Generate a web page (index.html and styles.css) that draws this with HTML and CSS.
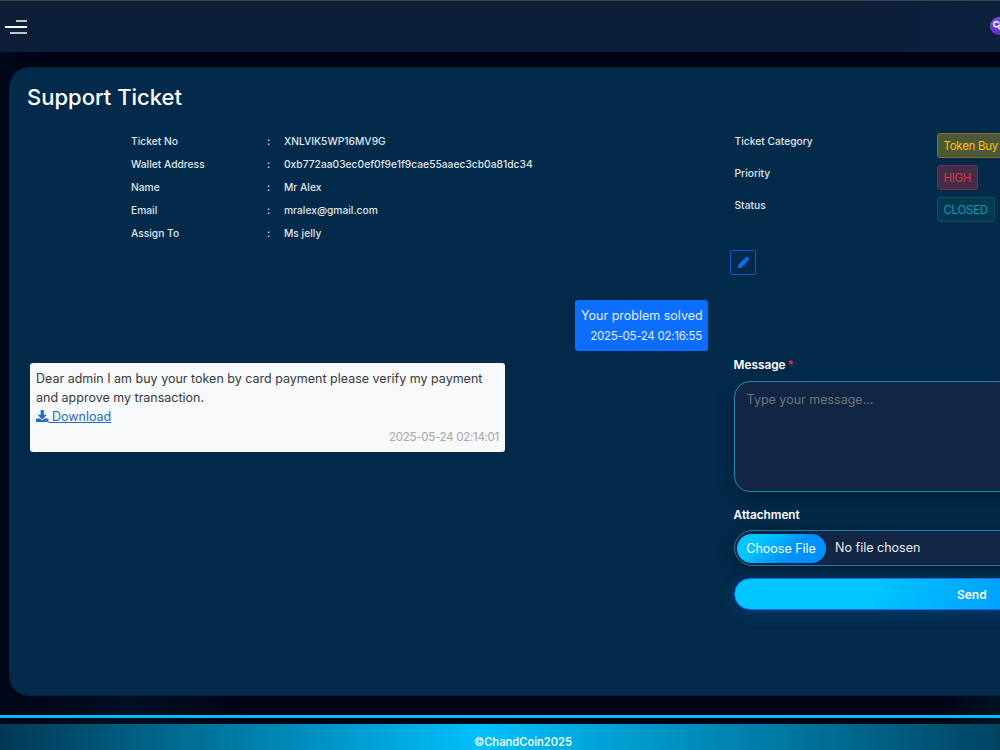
FILE: index.html
```html
<!DOCTYPE html>
<html lang="en">
<head>
<meta charset="utf-8">
<title>Support Ticket</title>
<link rel="stylesheet" href="styles.css">
</head>
<body>
<div class="page">
  <header class="topbar">
    <div class="burger"><i></i><i></i><i></i></div>
    <div class="coin">
      <svg width="18" height="18" viewBox="0 0 18 18" fill="none" stroke="#fff" stroke-width="1.4" stroke-linejoin="round"><path d="M9.2 6.4 L9 5.8 L6.4 4.4 L3.8 5.8 L3.8 8.7 L6.4 10.1 L11.300 7.300 L13.800 8.500 L13.800 11.300 L11.300 12.700 L9 11.300 L9 9.800"/></svg>
    </div>
  </header>
  <main class="card">
    <h1 class="title">Support Ticket</h1>
    <div class="columns">
      <section class="left">
        <dl class="details">
          <dt>Ticket No</dt><dd>:</dd><dd>XNLVIK5WP16MV9G</dd>
          <dt>Wallet Address</dt><dd>:</dd><dd>0xb772aa03ec0ef0f9e1f9cae55aaec3cb0a81dc34</dd>
          <dt>Name</dt><dd>:</dd><dd>Mr Alex</dd>
          <dt>Email</dt><dd>:</dd><dd>mralex@gmail.com</dd>
          <dt>Assign To</dt><dd>:</dd><dd>Ms jelly</dd>
        </dl>
        <div class="chat">
          <div class="bubble sent"><p>Your problem solved</p><time>2025-05-24 02:16:55</time></div>
          <div class="bubble received">
            <p>Dear admin I am buy your token by card payment please verify my payment<br>and approve my transaction.</p>
            <a class="download"><svg width="12.5" height="12.5" viewBox="0 0 512 512" fill="currentColor"><path d="M216 0h80c13.300 0 24 10.700 24 24v168h87.700c17.800 0 26.700 21.500 14.100 34.100L269.700 378.300c-7.500 7.500-19.800 7.500-27.300 0L90.100 226.100c-12.600-12.600-3.700-34.100 14.100-34.100H192V24c0-13.300 10.700-24 24-24zm296 376v112c0 13.300-10.700 24-24 24H24c-13.300 0-24-10.700-24-24V376c0-13.300 10.700-24 24-24h146.700l49 49c20.100 20.100 52.500 20.100 72.600 0l49-49H488c13.300 0 24 10.700 24 24zM408 444a20 20 0 1 0 40 0 20 20 0 1 0-40 0z" fill-rule="evenodd"/></svg> Download</a>
            <time>2025-05-24 02:14:01</time>
          </div>
        </div>
      </section>
      <aside class="right">
        <div class="meta">
          <span>Ticket Category</span><b class="tag warning">Token Buy</b>
          <span>Priority</span><b class="tag danger">HIGH</b>
          <span>Status</span><b class="tag info">CLOSED</b>
        </div>
        <div class="edit"><svg width="11" height="11" viewBox="0 0 512 512" fill="currentColor" stroke="currentColor" stroke-width="14"><path d="M290.740 93.240l128.020 128.020-277.990 277.990-114.140 12.600C11.350 513.540-1.560 500.620.140 485.340l12.700-114.220 277.900-277.880zm207.200-19.060l-60.110-60.110c-18.750-18.750-49.160-18.750-67.910 0l-56.550 56.550 128.020 128.020 56.550-56.550c18.750-18.760 18.750-49.160 0-67.910z"/></svg></div>
        <form class="form">
          <label>Message <em>*</em></label>
          <div class="textarea">Type your message...</div>
          <label>Attachment</label>
          <div class="file"><span class="choose">Choose File</span><span>No file chosen</span></div>
          <div class="send">Send</div>
        </form>
      </aside>
    </div>
  </main>
  <footer class="footer"><span>©ChandCoin2025</span></footer>
</div>
</body>
</html>
```
FILE: styles.css
```css
* { box-sizing: border-box; }
html, body { margin: 0; height: 750px; overflow: hidden; }
body { background: #000314; font: 12.5px/1.5 Inter, sans-serif; color: #fff; }
p, dl, dd, h1 { margin: 0; }
.page {
  width: 1000px; height: 750px; display: flex; flex-direction: column; overflow: hidden;
  background:
    radial-gradient(ellipse 120px 60px at 130px 710px, #001024, transparent),
    radial-gradient(ellipse 90px 90px at 1020px 715px, #001826, transparent),
    linear-gradient(90deg, #00071a, #000314 40px);
}
.topbar {
  height: 52px; width: 1238px; border-top: 1px solid #42474a; padding: 0 230px 0 5px;
  display: flex; align-items: center; justify-content: space-between;
  background: linear-gradient(90deg, #0c1e38 0 850px, #0c213d 1000px);
}
.burger { display: flex; flex-direction: column; align-items: flex-end; gap: 4px; width: 22px; margin-top: 1px; }
.burger i { height: 2px; width: 22px; background: #fff; }
.burger i:first-child { width: 11px; opacity: .75; }
.burger i:last-child { width: 17px; opacity: .75; }
.coin { width: 18px; height: 18px; border-radius: 50%; background: linear-gradient(#7d4be4, #5a30c4); overflow: hidden; display: flex; }
.card {
  margin: 15px 0 0 9px; height: 630px; border: 1px solid #03243f; border-radius: 20px;
  background: #032a4a; padding: 13px 17px; width: 1220px;
}
.title { font-size: 22px; font-weight: 500; line-height: 33px; height: 52px; }
.columns { display: flex; gap: 25px; }
.left { width: 681px; }
.details {
  display: grid; grid-template-columns: 136px 17px 1fr; grid-auto-rows: 23px; align-content: start;
  padding-left: 104px; font-size: 10.25px; font-weight: 450; line-height: 16px; color: #dfe6eb; height: 167px;
}
.chat { display: flex; flex-direction: column; gap: 12px; padding-left: 3px; }
.bubble { padding: 7px 6px 5px; border-radius: 3px; white-space: nowrap; }
.bubble time { display: block; text-align: right; font-size: 11.5px; letter-spacing: -.27px; line-height: 16px; }
.sent { align-self: flex-end; width: 133px; height: 51px; background: #0d6efd; color: #e1ecff; }
.sent time { margin-top: 2px; }
.received { width: 475px; height: 89px; background: #f8f9fa; color: #35393d; }
.received time { color: #a4a6a8; margin-top: 3px; }
.download { display: block; width: max-content; color: #2468cb; text-decoration: underline; line-height: 19px; }
.download svg { vertical-align: -1px; }
.right { width: 476px; }
.meta {
  display: grid; grid-template-columns: 202px 1fr; grid-auto-rows: 32px; justify-items: start;
  font-size: 10.25px; line-height: 16px; color: #dfe6eb; height: 117px; padding-left: 1.5px;
}
.meta span { font-weight: 450; }
.tag { font-weight: 400; font-size: 11.5px; letter-spacing: -.28px; line-height: 24px; height: 25px; border: 1px solid; border-radius: 3px; padding: 0 6px; white-space: nowrap; }
.warning { color: #ffc107; background: #4f5836; border-color: #80732b; }
.danger { color: #dc3545; background: #452d49; border-color: #743048; }
.info { color: #1198ad; background: #04384f; border-color: #065364; }
.edit { width: 26px; height: 25px; margin-left: -3px; border: 1px solid #0a58ca; border-radius: 2px; color: #0d6efd; display: flex; align-items: center; justify-content: center; }
.form { margin-top: 81px; padding-left: .6px; display: flex; flex-direction: column; }
.form label { font-size: 11.8px; font-weight: 600; line-height: 18px; }
.form em { color: #dc3545; font-style: normal; margin-left: -1px; }
.textarea {
  height: 111px; margin: 7px 0 14px; padding: 9px 12px; border: 1px solid #2289b5; border-radius: 16px;
  background: #122544; color: #6c757d; box-shadow: 0 6px 18px rgba(0, 0, 0, .25);
}
.file {
  height: 36px; margin-top: 6px; border: 1px solid #207ca4; border-radius: 18px; padding: 1px 2px 0;
  display: flex; align-items: center; gap: 9.5px; background: #122544; color: #e9edf2;
  box-shadow: 0 4px 18px rgba(0, 0, 0, .3);
}
.choose { height: 29px; line-height: 29px; width: 89px; text-align: center; border-radius: 15px; background: linear-gradient(135deg, #00c6ff 25%, #0090ff 62%); color: #fff; }
.send {
  height: 32px; margin-top: 12px; border: 1px solid #0d6efd; border-radius: 16px; line-height: 32px;
  text-align: center; font-size: 12px; font-weight: 600; padding-left: 1px;
  background: linear-gradient(105deg, #00c6ff 28%, #0090ff 70%); box-shadow: 0 4px 16px rgba(0, 114, 255, .22);
}
.footer {
  margin-top: 19px; border-top: 3px solid #00bdf2; padding-top: 6px; height: 35px; width: 1046px;
}
.footer span {
  display: block; height: 26px; line-height: 36px; text-align: center; font-size: 11.1px; font-weight: 600; color: #e8f9ff;
  background: linear-gradient(90deg, #023854, #00c0fb 46%, #023854);
}
```
